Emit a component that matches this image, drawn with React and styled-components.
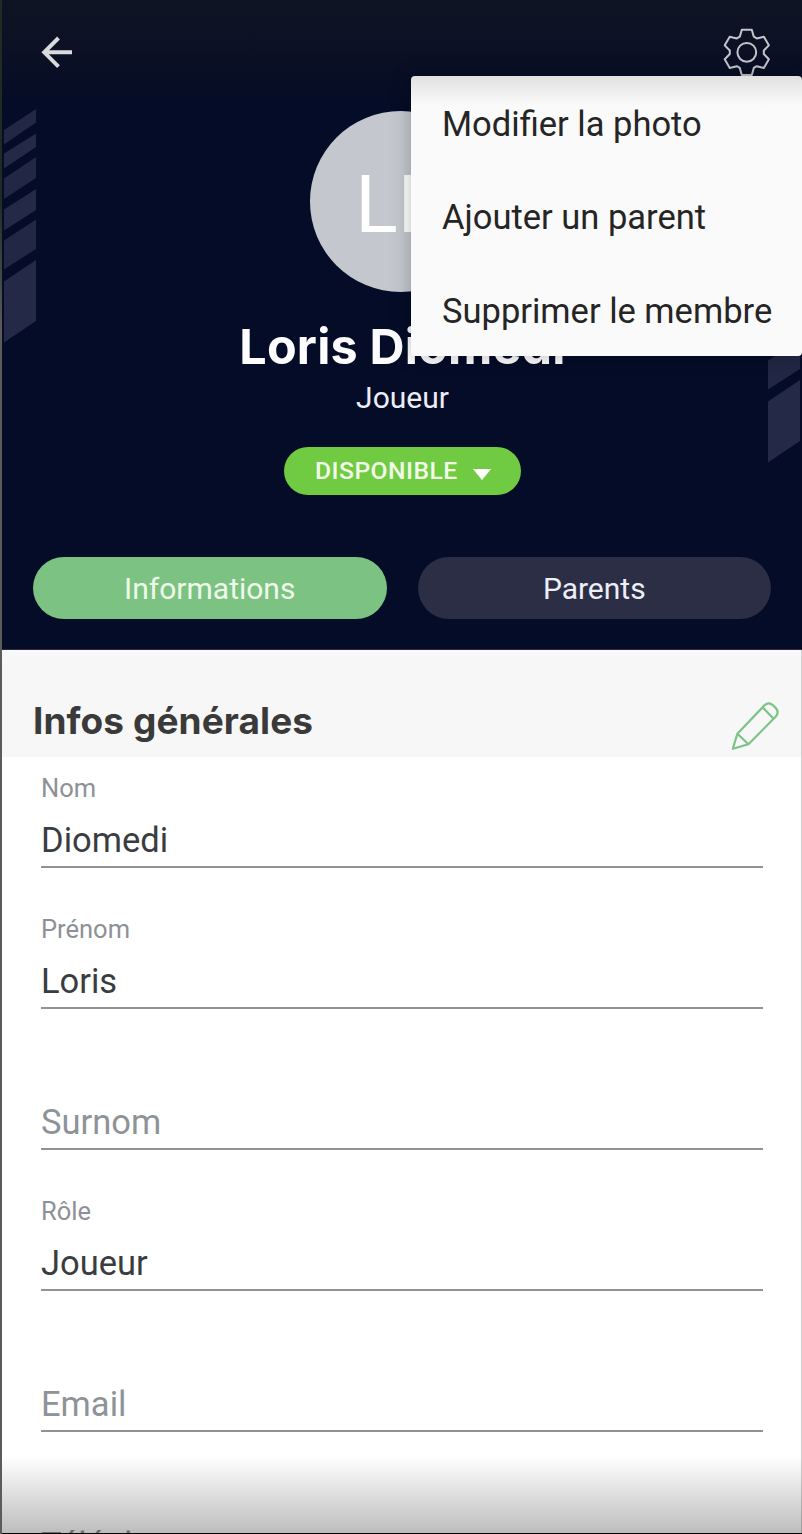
import React from "react";
import styled, { createGlobalStyle } from "styled-components";

const GlobalStyle = createGlobalStyle`
  *, *::before, *::after { box-sizing: border-box; }
  body { margin: 0; background: #fff; }
  button { font: inherit; border: 0; padding: 0; background: none; }
`;

const Screen = styled.div`
  position: relative;
  width: 802px;
  height: 1534px;
  overflow: hidden;
  padding-left: 2px;
  background: linear-gradient(#1f2c22 0, #1f2c26 200px, #5b5b5b 330px, #5b5b5b 100%);
  font-family: Roboto, "Liberation Sans", sans-serif;
  display: flex;
  flex-direction: column;
`;

const Hero = styled.header`
  position: relative;
  flex: none;
  height: 650px;
  background: linear-gradient(#0f1424 0, #0b1024 50px, #040c27 108px);
  border-bottom: 1px solid #2b2d35;
  display: flex;
  flex-direction: column;
  align-items: center;
`;

const Stripes = styled.svg`
  position: absolute;
  width: 32px;
  height: 234px;
  top: ${(p) => p.$top}px;
  left: ${(p) => p.$left}px;
`;

const TopBar = styled.div`
  width: 100%;
  height: 111px;
  padding: 28px 31px 0 37px;
  display: flex;
  justify-content: space-between;
  align-items: flex-start;
`;

const IconButton = styled.button`
  display: flex;
  svg { display: block; }
`;

const Avatar = styled.div`
  width: 181px;
  height: 181px;
  margin-right: 3px;
  border-radius: 50%;
  background: #c4c8ce;
  color: #fff;
  font-size: 79px;
  line-height: 188px;
  text-indent: 4px;
  text-align: center;
`;

const Name = styled.h1`
  margin: 30px 0 0 1px;
  font: 700 48.5px/50px Inter, sans-serif;
  letter-spacing: 0.2px;
  color: #fdfdff;
  white-space: nowrap;
`;

const Role = styled.div`
  margin: 7px 0 0 1px;
  font-size: 30px;
  line-height: 38px;
  color: #eceef6;
`;

const Status = styled.button`
  margin: 30px 0 0 1px;
  width: 237px;
  height: 48px;
  border-radius: 24px;
  background: #70cb42;
  color: #f2fbe9;
  display: flex;
  align-items: center;
  padding-left: 31px;
  gap: 15px;
  && { font: 500 24.7px/50px Roboto, sans-serif; letter-spacing: 0.45px; }
  svg { margin-top: 6px; }
`;

const Tabs = styled.nav`
  width: 100%;
  margin-top: 61.5px;
  padding: 0 31px;
  display: flex;
  gap: 31px;
`;

const Tab = styled.button`
  flex: 1;
  height: 62px;
  border-radius: 31px;
  && { font-size: 30px; line-height: 64px; }
  text-align: center;
  color: ${(p) => (p.$active ? "#eefbe9" : "#eceef8")};
  background: ${(p) => (p.$active ? "#7cc282" : "#2c2e45")};
`;

const Menu = styled.div`
  position: absolute;
  top: 76px;
  left: 409px;
  width: 391px;
  height: 279.5px;
  border-radius: 4px;
  background: linear-gradient(#e1e1e2 0, #fafafa 30px);
  box-shadow: 0 0 20px rgba(0, 0, 0, 0.26);
`;

const MenuItem = styled.div`
  height: 93.3px;
  padding-left: 31px;
  font-size: 34.5px;
  line-height: 97px;
  color: #252525;
  white-space: nowrap;
`;

const Content = styled.main`
  flex: 1;
  overflow: hidden;
  background: #fff;
  border-right: 1px solid #cfcfd2;
`;

const SectionHeader = styled.div`
  height: 107px;
  padding: 52px 22px 0 31px;
  display: flex;
  justify-content: space-between;
  align-items: flex-start;
  background: linear-gradient(#f8f8fd, #f7f7f7 14px);
`;

const SectionTitle = styled.h2`
  margin: -6px 0 0;
  font: 700 37px/49px Inter, sans-serif;
  letter-spacing: 0.08px;
  color: #3a3a3a;
  white-space: nowrap;
`;

const Fields = styled.div`
  padding: 16px 38px 0 39px;
`;

const Field = styled.div`
  height: 141px;
`;

const Label = styled.div`
  height: 30px;
  font-size: 25.5px;
  line-height: 31px;
  color: #8d9196;
`;

const Value = styled.div`
  height: 64.5px;
  padding-top: 12px;
  border-bottom: 2px solid #929292;
  font-size: 34.5px;
  line-height: 50px;
  color: ${(p) => (p.$empty ? "#8d9397" : "#3b3c3f")};
`;

const BottomFade = styled.div`
  position: absolute;
  left: 2px;
  right: 0;
  bottom: 0;
  height: 78px;
  background: linear-gradient(rgba(0, 0, 0, 0), rgba(0, 0, 0, 0.26));
  border-bottom: 1px solid #050505;
`;

const stripes = [
  [21, 35.5, 0, 13.5],
  [44.5, 59.5, 24.5, 38],
  [69.5, 90, 48, 69],
  [100.5, 121.5, 80, 101],
  [131.5, 160.5, 110.5, 140],
  [172.5, 233.5, 151, 212],
];

function StripeColumn({ left, top }) {
  return (
    <Stripes viewBox="0 0 32 234" $left={left} $top={top}>
      {stripes.map(([lt, lb, rt, rb], i) => (
        <polygon key={i} points={`0,${lt} 32,${rt} 32,${rb} 0,${lb}`} fill={i % 2 ? "#232946" : "#212744"} />
      ))}
    </Stripes>
  );
}

const tooth = [[-7, -15.6], [-5, -22.6], [5, -22.6], [7, -15.6]];
const gearPoints = Array.from({ length: 6 }, (_, i) => {
  const a = (i * Math.PI) / 3;
  return tooth
    .map(([x, y]) => `${(x * Math.cos(a) - y * Math.sin(a)).toFixed(2)},${(x * Math.sin(a) + y * Math.cos(a)).toFixed(2)}`)
    .join(" ");
}).join(" ");

const GearIcon = () => (
  <svg width="48" height="48" viewBox="-23.8 -24.3 48 48" fill="none" stroke="#c3c5cd" strokeWidth="2" strokeLinejoin="round">
    <polygon points={gearPoints} />
    <circle r="9.4" />
  </svg>
);

const BackIcon = () => (
  <svg width="38" height="48" viewBox="0 0 38 48" fill="none" stroke="#d9dade" strokeWidth="3.9">
    <path d="M33 24.3H5M19.5 10L5.2 24.3L19.5 38.6" />
  </svg>
);

const PencilIcon = () => (
  <svg width="48" height="49" viewBox="731 702 48 49" fill="none" stroke="#7cc387" strokeWidth="2.2" strokeLinejoin="round">
    <path d="M732.8 748.8L737.4 733.8L764.5 705.3Q768.8 701.5 773 705.3L775.8 708.1Q779.5 712.3 775.6 716.8L748.4 744.3Z" />
    <path d="M737.4 733.8L748.4 744.3M762.6 707.3L773.6 718.7" />
  </svg>
);

const fields = [
  { label: "Nom", value: "Diomedi" },
  { label: "Prénom", value: "Loris" },
  { placeholder: "Surnom" },
  { label: "Rôle", value: "Joueur" },
  { placeholder: "Email" },
  { placeholder: "Téléphone" },
];

export default function App() {
  return (
    <Screen>
      <GlobalStyle />
      <Hero>
        <StripeColumn left={2} top={108.5} />
        <StripeColumn left={765.5} top={229} />
        <TopBar>
          <IconButton aria-label="Retour"><BackIcon /></IconButton>
          <IconButton aria-label="Réglages"><GearIcon /></IconButton>
        </TopBar>
        <Avatar>LD</Avatar>
        <Name>Loris Diomedi</Name>
        <Role>Joueur</Role>
        <Status>
          DISPONIBLE
          <svg width="18" height="11" viewBox="0 0 18 11"><path d="M0 0H18L9 11Z" fill="#fff" /></svg>
        </Status>
        <Tabs>
          <Tab $active>Informations</Tab>
          <Tab>Parents</Tab>
        </Tabs>
        <Menu>
          <MenuItem>Modifier la photo</MenuItem>
          <MenuItem>Ajouter un parent</MenuItem>
          <MenuItem>Supprimer le membre</MenuItem>
        </Menu>
      </Hero>
      <Content>
        <SectionHeader>
          <SectionTitle>Infos générales</SectionTitle>
          <IconButton aria-label="Modifier"><PencilIcon /></IconButton>
        </SectionHeader>
        <Fields>
          {fields.map((f) => (
            <Field key={f.value || f.placeholder}>
              <Label>{f.label}</Label>
              <Value $empty={!f.value}>{f.value || f.placeholder}</Value>
            </Field>
          ))}
        </Fields>
      </Content>
      <BottomFade />
    </Screen>
  );
}
